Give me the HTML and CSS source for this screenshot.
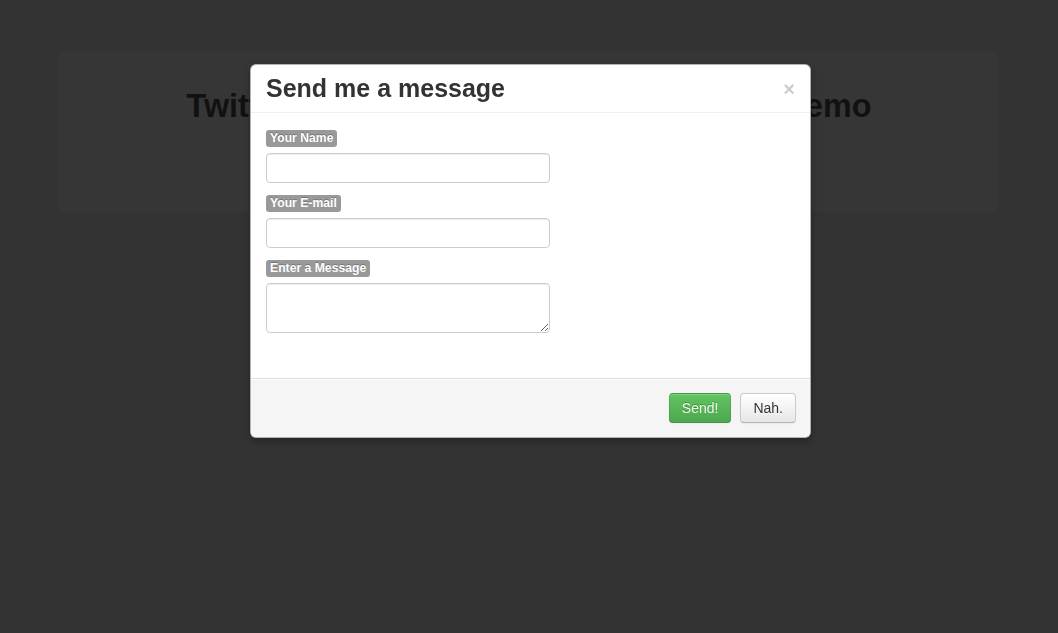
FILE: index.html
```html
<!DOCTYPE html>
<html lang="en">
<head>
<meta charset="utf-8">
<title>Twitter Bootstrap Modal Contact Form Demo</title>
<link rel="stylesheet" href="styles.css">
</head>
<body>
<div class="container">
  <div class="hero">
    <h1>Twitter Bootstrap Modal Contact Form Demo</h1>
  </div>
</div>
<div class="backdrop"></div>
<div class="modal">
  <div class="modal-header">
    <h3>Send me a message</h3>
    <span class="close">×</span>
  </div>
  <form class="modal-body">
    <div class="field">
      <span class="label">Your Name</span>
      <input type="text" class="input">
    </div>
    <div class="field">
      <span class="label">Your E-mail</span>
      <input type="text" class="input">
    </div>
    <div class="field">
      <span class="label">Enter a Message</span>
      <textarea class="input textarea"></textarea>
    </div>
  </form>
  <div class="modal-footer">
    <button class="btn btn-success">Send!</button>
    <button class="btn">Nah.</button>
  </div>
</div>
</body>
</html>
```

FILE: styles.css
```css
html, body {
  margin: 0;
  padding: 0;
}
body {
  background: #333333;
  font-family: "Liberation Sans", Arial, sans-serif;
  font-size: 14px;
  color: #333;
  height: 633px;
  overflow: hidden;
}
.container {
  width: 940px;
  margin: 0 auto;
  padding-top: 52px;
}
.hero {
  background: #363636;
  border-radius: 6px;
  height: 160px;
  box-sizing: border-box;
  padding-top: 34px;
}
.hero h1 {
  margin: 0;
  text-align: center;
  font-size: 32.3px;
  line-height: 40px;
  font-weight: bold;
  color: #111;
}
.backdrop {
  position: fixed;
  inset: 0;
  background: transparent;
}
.modal {
  position: absolute;
  left: 250px;
  top: 64px;
  width: 561px;
  box-sizing: border-box;
  background: #fff;
  border: 1px solid rgba(0,0,0,0.3);
  border-radius: 6px;
  box-shadow: 0 3px 7px rgba(0,0,0,0.3);
  overflow: hidden;
}
.modal-header {
  display: flex;
  align-items: center;
  justify-content: space-between;
  padding: 8px 15px 9px;
  border-bottom: 1px solid #eee;
}
.modal-header h3 {
  margin: 0;
  font-size: 25px;
  line-height: 30px;
  font-weight: bold;
  color: #333;
}
.close {
  font-size: 20px;
  font-weight: bold;
  line-height: 18px;
  color: #000;
  opacity: 0.2;
  margin-right: 0;
  margin-top: 2px;
}
.modal-body {
  display: flex;
  flex-direction: column;
  gap: 12px;
  margin: 0;
  padding: 17px 15px 45px;
}
.field {
  display: flex;
  flex-direction: column;
  align-items: flex-start;
  gap: 6px;
}
.label {
  background: #999;
  color: #fff;
  font-size: 12.2px;
  font-weight: bold;
  line-height: 15px;
  padding: 1px 4px;
  border-radius: 3px;
  text-shadow: 0 -1px 0 rgba(0,0,0,0.25);
}
.input {
  width: 284px;
  height: 30px;
  box-sizing: border-box;
  border: 1px solid #ccc;
  border-radius: 4px;
  box-shadow: inset 0 1px 1px rgba(0,0,0,0.075);
  padding: 4px 6px;
  font-family: "Liberation Sans", Arial, sans-serif;
  font-size: 14px;
  margin: 0;
  background: #fff;
}
.textarea {
  height: 50px;
  resize: both;
  display: block;
}
.modal-footer {
  display: flex;
  justify-content: flex-end;
  gap: 9px;
  padding: 14px 14px 14px 15px;
  background: #f5f5f5;
  border-top: 1px solid #ddd;
  box-shadow: inset 0 1px 0 #fff;
}
.btn {
  font-family: "Liberation Sans", Arial, sans-serif;
  font-size: 14px;
  line-height: 20px;
  padding: 4px 12px;
  margin: 0;
  border: 1px solid #ccc;
  border-bottom-color: #b3b3b3;
  border-radius: 4px;
  color: #333;
  background: linear-gradient(#ffffff, #e6e6e6);
  text-shadow: 0 1px 1px rgba(255,255,255,0.75);
  box-shadow: inset 0 1px 0 rgba(255,255,255,0.2), 0 1px 2px rgba(0,0,0,0.05);
}
.btn-success {
  color: #eef9ea;
  background: linear-gradient(#62c462, #4ea84e);
  border-color: rgba(0,0,0,0.1) rgba(0,0,0,0.1) rgba(0,0,0,0.25);
  text-shadow: 0 -1px 0 rgba(0,0,0,0.25);
}
```
